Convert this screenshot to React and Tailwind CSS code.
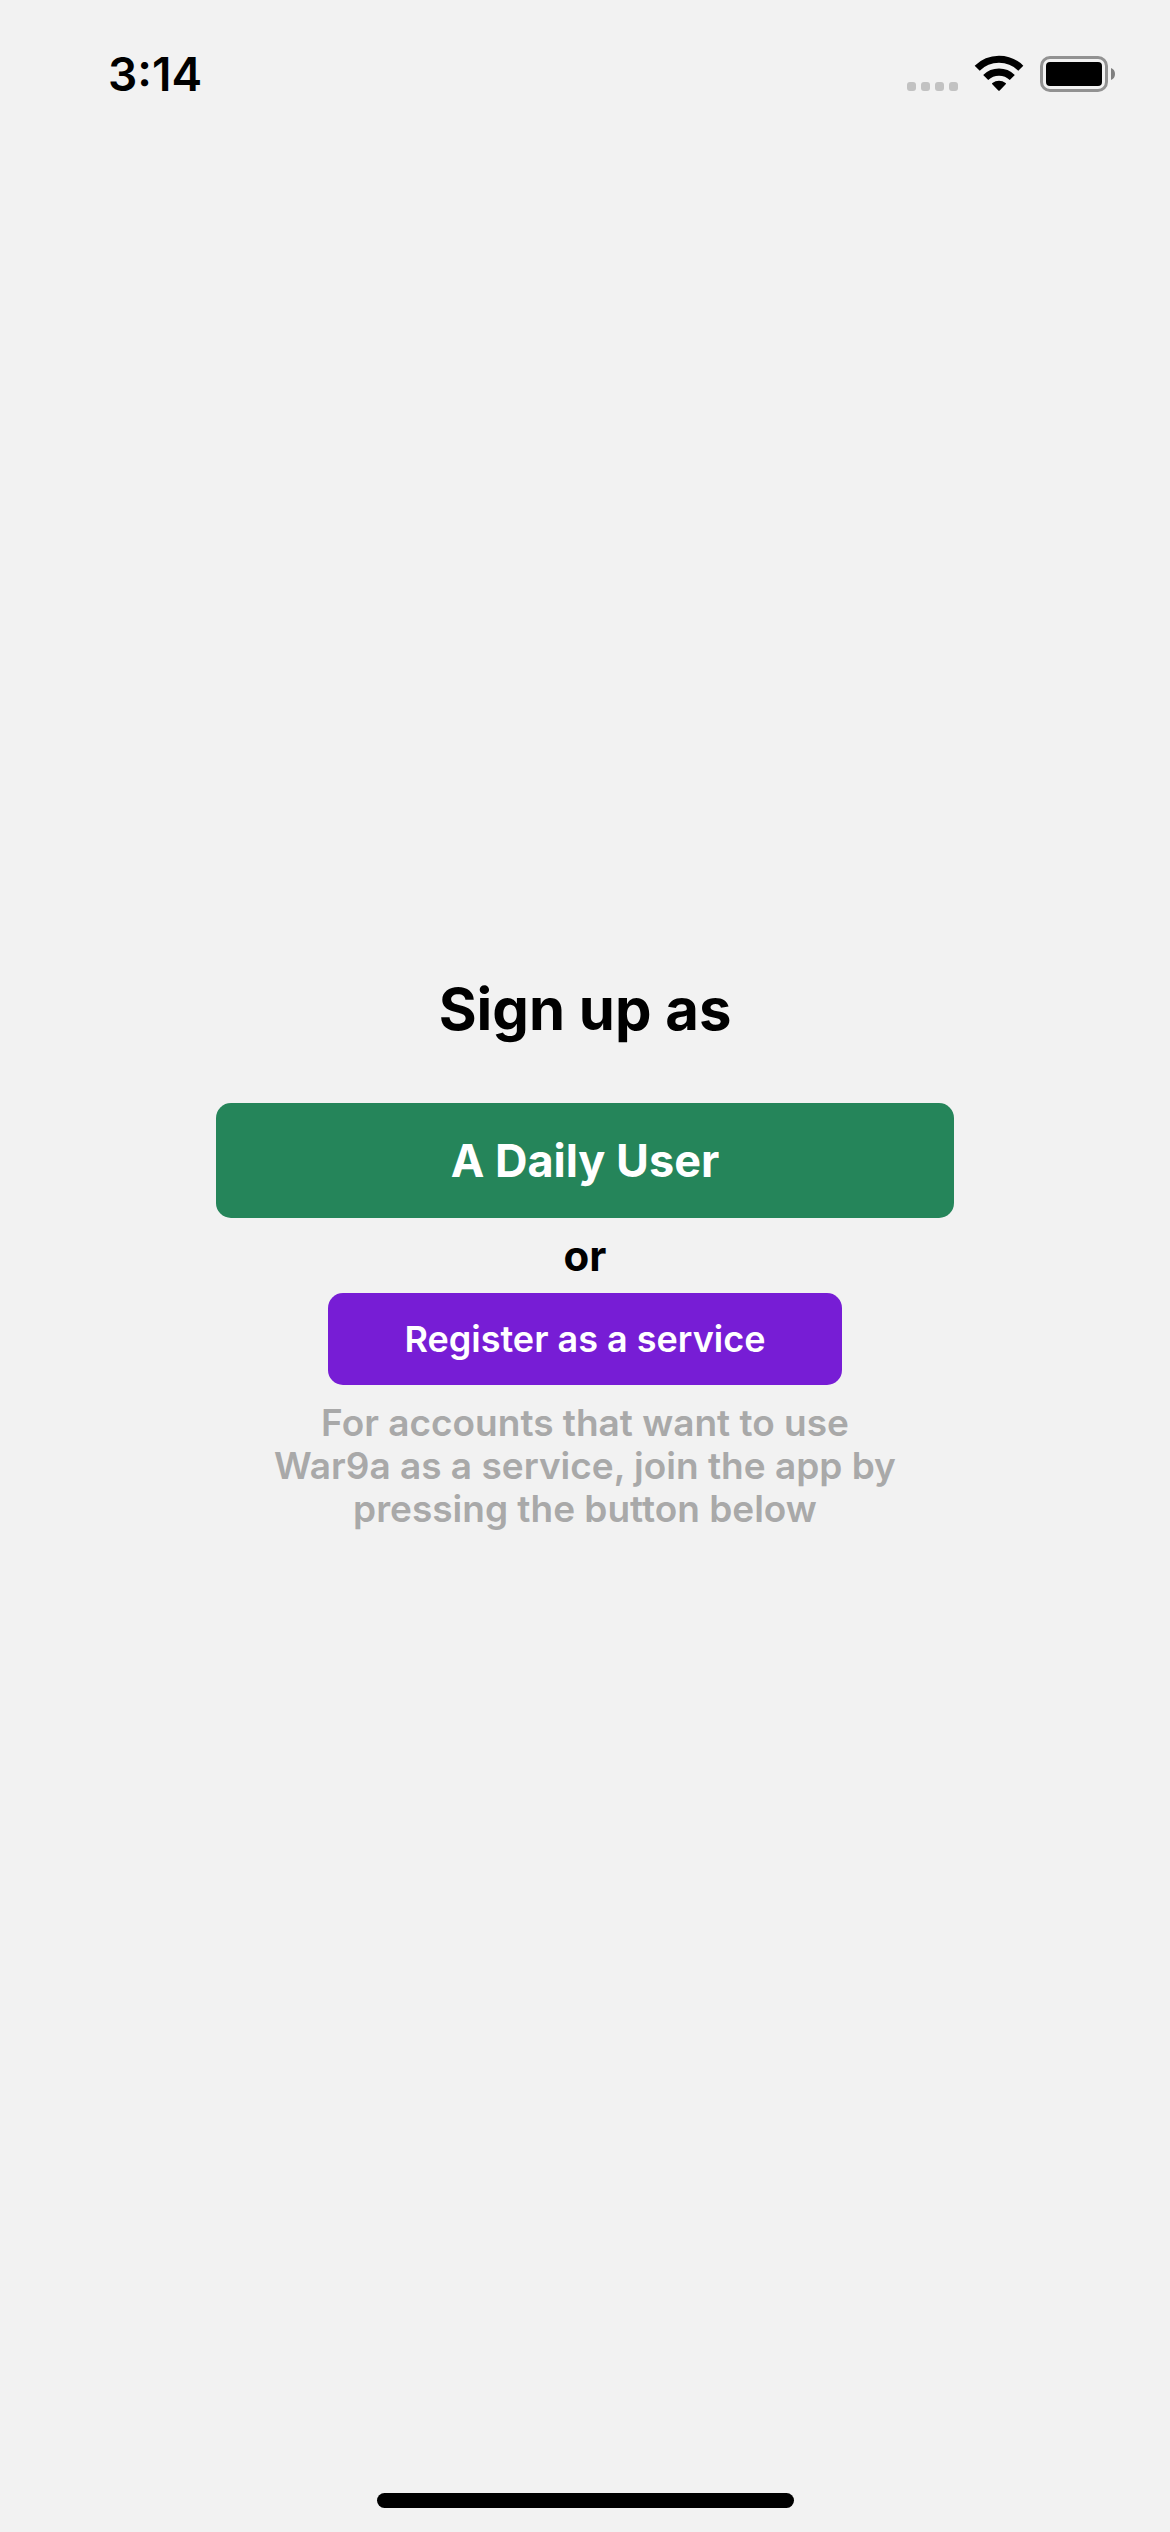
function StatusBar() {
  return (
    <header className="flex h-[141px] items-start justify-between pt-[51px] pr-[54px] pl-[108px]">
      <time className="text-[46px] leading-[46px] font-semibold">3:14</time>
      <div className="flex h-[46px] items-center gap-4">
        <svg width="52" height="36" viewBox="0 0 52 36" fill="#c2c2c2" aria-hidden="true">
          <rect x="1" y="26" width="9" height="9" rx="3" />
          <rect x="15" y="26" width="9" height="9" rx="3" />
          <rect x="29" y="26" width="9" height="9" rx="3" />
          <rect x="43" y="26" width="9" height="9" rx="3" />
        </svg>
        <svg width="50" height="38" viewBox="0 0 50 38" aria-hidden="true">
          <g fill="none" stroke="#000" strokeWidth="7.2">
            <path d="M3.200 13.200a31 31 0 0 1 43.600 0" />
            <path d="M11.700 22.500a19 19 0 0 1 26.600 0" />
          </g>
          <path d="M18.300 29.300q-.7-.7.100-1.300a11 11 0 0 1 13.200 0q.8.6.1 1.300l-6 6.200q-.7.7-1.400 0z" />
        </svg>
        <svg width="76" height="36" viewBox="0 0 76 36" aria-hidden="true">
          <rect x="1.500" y="1.500" width="65" height="33" rx="8.500" fill="none" stroke="#929292" strokeWidth="3" />
          <rect x="6" y="6" width="56" height="24" rx="4" />
          <path d="M71 12q4 1.500 4 6t-4 6z" fill="#808080" />
        </svg>
      </div>
    </header>
  );
}

export default function App() {
  return (
    <div className="flex min-h-screen flex-col bg-[#f2f2f2] font-['Inter',sans-serif] text-black">
      <StatusBar />
      <main className="flex flex-1 flex-col items-center pt-[828px] text-center">
        <h1 className="text-[58px] leading-[80px] font-bold">Sign up as</h1>
        <button type="button" className="mt-[54px] h-[115px] w-[63%] rounded-[15px] bg-[#25855a] text-[45px] font-bold text-white">
          A Daily User
        </button>
        <p className="text-[42px] leading-[75px] font-bold">or</p>
        <button type="button" className="h-[92px] w-[44%] rounded-[15px] bg-[#771dd5] text-[36px] font-semibold text-white">
          Register as a service
        </button>
        <p className="mt-4 w-[55%] text-[37px] leading-[43px] font-semibold text-[#a9a9a9]">
          For accounts that want to use War9a as a service, join the app by pressing the button below
        </p>
      </main>
      <footer className="flex justify-center pb-6">
        <div className="h-[15px] w-[417px] rounded-full bg-black" />
      </footer>
    </div>
  );
}
